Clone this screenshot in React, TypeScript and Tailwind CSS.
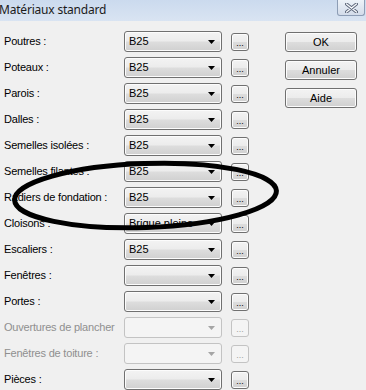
import { FunctionComponent } from "react";

type MaterialRow = { label: string; value?: string; disabled?: boolean };

const rows: MaterialRow[] = [
  { label: "Poutres :", value: "B25" },
  { label: "Poteaux :", value: "B25" },
  { label: "Parois :", value: "B25" },
  { label: "Dalles :", value: "B25" },
  { label: "Semelles isolées :", value: "B25" },
  { label: "Semelles filantes :", value: "B25" },
  { label: "Radiers de fondation :", value: "B25" },
  { label: "Cloisons :", value: "Brique pleine" },
  { label: "Escaliers :", value: "B25" },
  { label: "Fenêtres :" },
  { label: "Portes :" },
  { label: "Ouvertures de plancher", disabled: true },
  { label: "Fenêtres de toiture :", disabled: true },
  { label: "Pièces :" },
];

const aeroFace =
  "bg-[linear-gradient(to_bottom,#f3f3f3_0%,#ececec_48%,#dddddd_52%,#d0d0d0_100%)] border border-[#707070] shadow-[inset_0_0_0_1px_#fcfcfc]";

const ComboBox: FunctionComponent<{ value?: string; disabled?: boolean }> = ({
  value,
  disabled,
}) => {
  return (
    <div
      className={`w-[98px] h-[21px] rounded-[3px] flex items-center pl-[4px] pr-[6px] ${
        disabled ? "bg-[#f4f4f4] border border-[#c3c3c3]" : aeroFace
      }`}
    >
      <span className="flex-1 text-black whitespace-nowrap overflow-hidden leading-none">
        {value}
      </span>
      <svg width="7" height="4" viewBox="0 0 7 4">
        <polygon points="0,0 7,0 3.5,4" fill={disabled ? "#a5a5a5" : "#000"} />
      </svg>
    </div>
  );
};

const DotsButton: FunctionComponent<{ disabled?: boolean }> = ({ disabled }) => (
  <div
    className={`w-[18px] h-[18px] rounded-[3px] flex items-end justify-center pb-[2px] text-[9px] leading-none ${
      disabled ? "bg-[#f4f4f4] border border-[#c3c3c3] text-[#a0a0a0]" : `${aeroFace} text-black`
    }`}
  >
    ...
  </div>
);

const DialogButton: FunctionComponent<{ label: string }> = ({ label }) => (
  <div
    className={`w-[72px] h-[20px] rounded-[3px] flex items-center justify-center text-black ${aeroFace}`}
  >
    {label}
  </div>
);

export default function App() {
  return (
    <div className="relative w-[366px] h-[390px] overflow-hidden bg-[#f0f0f0] font-['Liberation_Sans',Arial,sans-serif] text-[11px]">
      <div className="h-[21px] flex items-start justify-between bg-[linear-gradient(to_bottom,#cbdaee,#d9e4f2)]">
        <span className="font-['Noto_Sans',sans-serif] text-[12px] leading-[20px] text-[#1b1b1b] -ml-[1px] tracking-[-0.2px]">
          Matériaux standard
        </span>
        <div className="w-[28px] h-[16px] mr-[1px] rounded-b-[3px] border border-t-0 border-[#8d9db5] bg-[linear-gradient(to_bottom,#edf2f8,#d3dcea)] flex items-center justify-center">
          <svg width="13" height="10" viewBox="0 0 13 10">
            <path
              d="M1.5 1 L11.5 9 M11.5 1 L1.5 9"
              stroke="#5a6478"
              strokeWidth="3.2"
              strokeLinecap="round"
            />
            <path
              d="M1.5 1 L11.5 9 M11.5 1 L1.5 9"
              stroke="#f7f9fc"
              strokeWidth="1.4"
              strokeLinecap="round"
            />
          </svg>
        </div>
      </div>

      <div className="flex pt-[10px]">
        <div className="flex flex-col gap-[5px] pl-[4px]">
          {rows.map(({ label, value, disabled }) => (
            <div key={label} className="h-[21px] flex items-center">
              <span
                className={`w-[120px] whitespace-nowrap overflow-hidden tracking-[-0.2px] ${
                  disabled ? "text-[#8f8f8f]" : "text-black"
                }`}
              >
                {label}
              </span>
              <ComboBox value={value} disabled={disabled} />
              <div className="ml-[9px]">
                <DotsButton disabled={disabled} />
              </div>
            </div>
          ))}
        </div>
        <div className="flex flex-col gap-[8px] ml-[36px] pt-[1px]">
          <DialogButton label="OK" />
          <DialogButton label="Annuler" />
          <DialogButton label="Aide" />
        </div>
      </div>

      {/* hand-drawn marker circling the foundation row */}
      <svg
        className="absolute inset-0 pointer-events-none"
        width="366"
        height="390"
        viewBox="0 0 366 390"
      >
        <ellipse
          cx="145.5"
          cy="195.5"
          rx="131"
          ry="32"
          transform="rotate(-2 145.5 195.5)"
          fill="none"
          stroke="#000"
          strokeWidth="5"
        />
      </svg>
    </div>
  );
}
